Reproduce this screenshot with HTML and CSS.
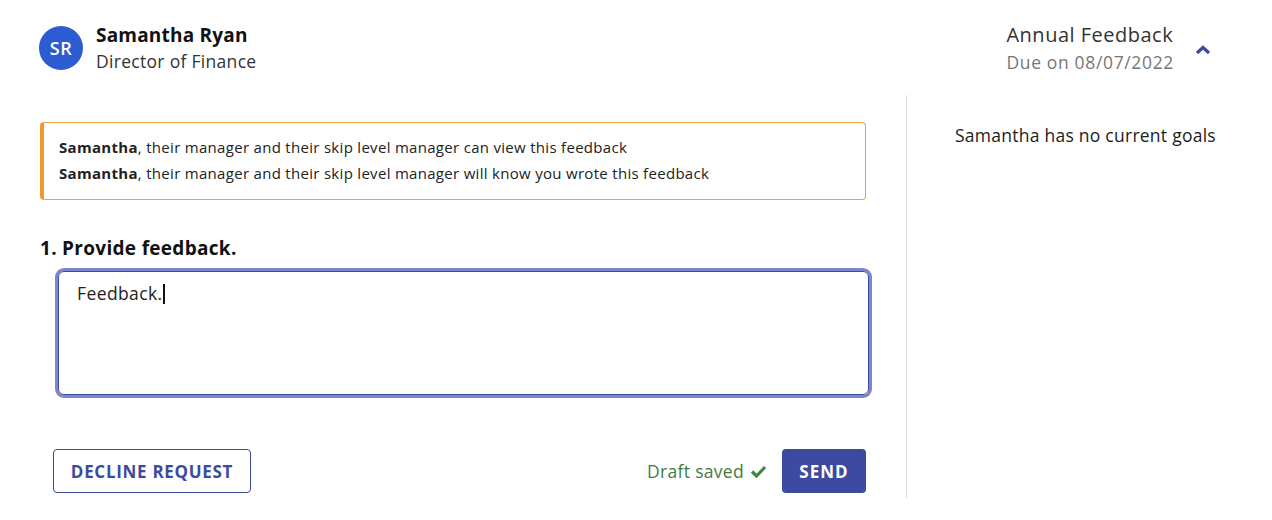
FILE: index.html
```html
<!DOCTYPE html>
<html>
<head>
<meta charset="utf-8">
<link rel="stylesheet" href="styles.css">
</head>
<body>
<div class="page">
  <header class="header">
    <div class="person">
      <div class="avatar">SR</div>
      <div class="person-text">
        <div class="name">Samantha Ryan</div>
        <div class="role">Director of Finance</div>
      </div>
    </div>
    <div class="review">
      <div class="review-text">
        <div class="review-title">Annual Feedback</div>
        <div class="review-due">Due on 08/07/2022</div>
      </div>
      <svg class="chevron" width="16" height="12" viewBox="0 0 16 12"><path d="M2 9 L8 3.5 L14 9" fill="none" stroke="#3c4aa0" stroke-width="3.2"/></svg>
    </div>
  </header>
  <div class="body">
    <main class="main">
      <div class="notice">
        <p><b>Samantha</b>, their manager and their skip level manager can view this feedback</p>
        <p><b>Samantha</b>, their manager and their skip level manager will know you wrote this feedback</p>
      </div>
      <h2 class="question">1. Provide feedback.</h2>
      <div class="textarea"><span>Feedback.</span><span class="caret"></span></div>
      <div class="actions">
        <button class="btn btn-outline">DECLINE REQUEST</button>
        <div class="right-actions">
          <span class="draft">Draft saved</span>
          <svg class="check" width="17" height="16" viewBox="0 0 17 16"><path d="M2 8.5 L6.5 13 L15 4" fill="none" stroke="#3f8a3f" stroke-width="3.2"/></svg>
          <button class="btn btn-primary">SEND</button>
        </div>
      </div>
    </main>
    <aside class="side">
      <p class="goals">Samantha has no current goals</p>
    </aside>
  </div>
</div>
</body>
</html>
```
FILE: styles.css
```css
* { box-sizing: border-box; }
body {
  margin: 0;
  font-family: "Open Sans", Lato, Arial, sans-serif;
  color: #1c1c1c;
  background: #fff;
}
.page { width: 1272px; height: 520px; padding: 20px 0 0 0; }
.header {
  display: flex;
  justify-content: space-between;
  padding: 0 61px 0 39px;
  height: 75px;
}
.person { display: flex; align-items: flex-start; gap: 13px; padding-top: 6px; }
.avatar {
  width: 44px; height: 44px; border-radius: 50%;
  background: #2d5bd1; color: #fff;
  display: flex; align-items: center; justify-content: center;
  font-size: 18px; font-weight: 600; letter-spacing: 0.5px;
}
.person-text { margin-top: -4px; }
.name { font-size: 19px; letter-spacing: 0.2px; font-weight: 700; line-height: 26px; color: #111; }
.role { font-size: 17.5px; letter-spacing: 0.3px; line-height: 26px; color: #333; }
.review { display: flex; align-items: flex-start; gap: 21px; }
.review-text { margin-top: 1px; text-align: left; }
.review-title { font-size: 20px; letter-spacing: 0.5px; line-height: 28px; color: #333; }
.review-due { font-size: 17.5px; letter-spacing: 0.65px; line-height: 26px; color: #777; }
.chevron { margin-top: 24px; }

.body { display: flex; }
.main { width: 907px; padding: 27px 40px 0 40px; border-right: 1px solid #dedede; height: 403px; }
.notice {
  border: 1px solid #eea33e;
  border-left: 4px solid #ef9a2e;
  border-radius: 4px;
  padding: 11px 16px 13px 15px;
}
.notice p { margin: 0; font-size: 15px; letter-spacing: 0.3px; line-height: 26px; color: #222; }
.notice b { font-weight: 700; }
.question { margin: 35px 0 10px 0; font-size: 19px; letter-spacing: 0.3px; font-weight: 700; line-height: 26px; color: #111; }
.textarea {
  margin-left: 18px;
  width: 811px;
  height: 124px;
  border: 1px solid #3c4aa0;
  border-radius: 6px;
  box-shadow: 0 0 0 3px #7c86cd;
  margin-top: 10px;
  padding: 10px 18px;
  font-size: 17.5px;
  letter-spacing: 0.4px;
  color: #222;
  line-height: 22px;
}
.caret { display: inline-block; width: 2px; height: 20px; background: #111; vertical-align: -4px; }
.actions {
  display: flex; justify-content: space-between; align-items: center;
  margin-top: 54px; padding-left: 13px;
}
.btn {
  height: 44px; border-radius: 4px; font-family: inherit;
  font-size: 17px; font-weight: 700; letter-spacing: 0.7px;
}
.btn-outline { width: 198px; background: #fff; border: 1px solid #3c4aa0; color: #3c4aa0; }
.btn-primary { width: 84px; background: #3c4aa0; border: none; color: #fff; letter-spacing: 1px; }
.right-actions { display: flex; align-items: center; }
.draft { color: #3f7d3f; font-size: 17.5px; letter-spacing: 0.3px; margin-right: 6px; }
.check { margin-right: 15px; }
.side { flex: 1; padding: 28px 0 0 48px; }
.goals { margin: 0; font-size: 17.5px; letter-spacing: 0.25px; color: #1c1c1c; line-height: 24px; }
```
